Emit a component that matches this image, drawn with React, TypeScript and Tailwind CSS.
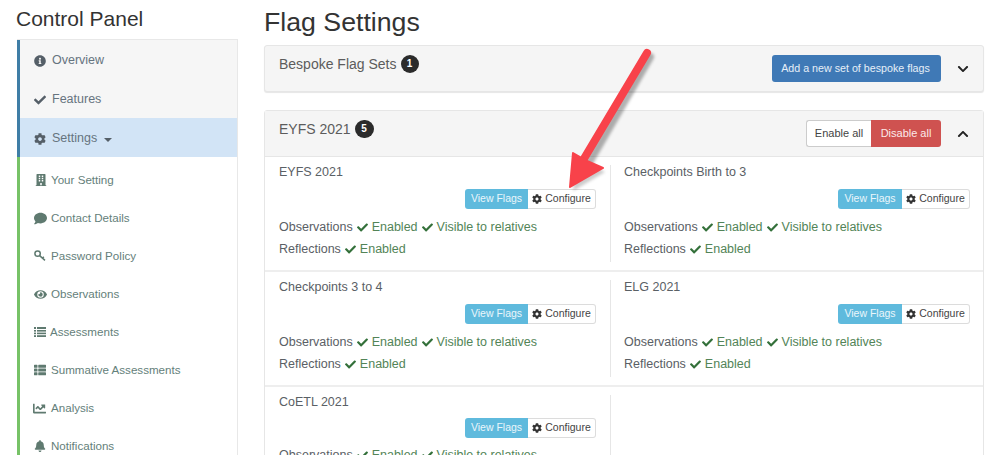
import React from "react";
import { FaInfoCircle, FaCheck, FaCog, FaBuilding, FaComment, FaEye, FaThList, FaChartLine, FaBell, FaChevronDown, FaChevronUp } from "react-icons/fa";

const font = { fontFamily: '"Liberation Sans", Arial, sans-serif' };

function Top({ icon, label, active, caret }: { icon: React.ReactNode; label: string; active?: boolean; caret?: boolean }) {
  return (
    <div className={`h-[39px] flex items-center pt-[2px] pl-[14px] border-l-[3px] border-[#3f7ea6] text-[12.5px] text-[#66747f] ${active ? "bg-[#d2e4f6]" : "bg-[#f6f6f6]"}`}>
      <span className="w-[18px] flex text-[#555f68]">{icon}</span>
      <span>{label}</span>
      {caret && <span className="ml-[7px] mt-[2px] w-0 h-0 border-x-[4px] border-x-transparent border-t-[4px] border-t-[#555f68]" />}
    </div>
  );
}

function Sub({ icon, label, w = 17 }: { icon: React.ReactNode; label: string; w?: number }) {
  return (
    <div className="h-[38px] flex items-center pl-[14px] text-[11.6px] text-[#64807a]">
      <span className="flex text-[#5f7a70]" style={{ width: w }}>{icon}</span>
      <span>{label}</span>
    </div>
  );
}

function ListIcon() {
  return (
    <svg width="12" height="12" viewBox="0 0 12 12" fill="currentColor">
      <rect x="0" y="1" width="2" height="2" />
      <rect x="3" y="1" width="9" height="2" />
      <rect x="0" y="4" width="2" height="1.6" />
      <rect x="3" y="4" width="9" height="1.6" />
      <rect x="0" y="6.6" width="2" height="1.6" />
      <rect x="3" y="6.6" width="9" height="1.6" />
      <rect x="0" y="9.2" width="2" height="1.8" />
      <rect x="3" y="9.2" width="9" height="1.8" />
    </svg>
  );
}

function KeyIcon() {
  return (
    <svg width="12" height="12" viewBox="0 0 12 12" fill="none" stroke="currentColor" strokeWidth="1.5">
      <circle cx="3.6" cy="3.6" r="2.7" />
      <path d="M5.6 5.6 L11 10.4 M8.6 8.2 L9.8 6.8" />
    </svg>
  );
}

function Status({ children }: { children: React.ReactNode }) {
  return (
    <span className="inline-flex items-center text-[#528457]">
      <FaCheck className="text-[#33703a] text-[11px] mx-[4px]" />
      {children}
    </span>
  );
}

function Cell({ title, tight, wide }: { title: string; tight?: boolean; wide?: boolean }) {
  return (
    <div className="h-[97px] mt-[8px] pl-[13px] pr-[13px] first:pl-[14px] first:pr-[14px] text-[12.5px] text-[#5a6065] first:border-r first:border-[#e6e6e6]">
      <div className="h-[17px] leading-[15px]">{title}</div>
      <div className={`flex justify-end text-[10.5px] h-[20px] ${tight ? "mt-[6px]" : "mt-[7px]"}`}>
        <span className={`${wide ? "w-[64px]" : "w-[63px]"} bg-[#5fbadd] text-[#eaf6fb] rounded-l-[3px] flex items-center justify-center`}>View Flags</span>
        <span className="w-[68px] border border-[#dcdcdc] border-l-0 rounded-r-[3px] text-[#444] flex items-center justify-center gap-[3px]">
          <FaCog className="text-[10px] text-[#333]" />Configure
        </span>
      </div>
      <div className={`flex items-center h-[18px] ${tight ? "mt-[8px]" : "mt-[9px]"}`}>
        Observations<Status>Enabled</Status><Status>Visible to relatives</Status>
      </div>
      <div className="flex items-center mt-[4px] h-[18px]">
        Reflections<Status>Enabled</Status>
      </div>
    </div>
  );
}

export default function App() {
  return (
    <div className="relative w-[1000px] h-[455px] overflow-hidden bg-white flex" style={font}>
      <aside className="w-[238px] pl-[16px] shrink-0">
        <h2 className="text-[21px] leading-[24px] mt-[7px] text-[#333]">Control Panel</h2>
        <div className="ml-[1px] mt-[8px] border-t border-r border-[#e8e8e8]">
          <Top icon={<FaInfoCircle className="text-[12px]" />} label="Overview" />
          <Top icon={<FaCheck className="text-[12px]" />} label="Features" />
          <Top icon={<FaCog className="text-[12px]" />} label="Settings" active caret />
          <div className="border-l-[3px] border-[#77c267] pt-[4px]">
            <Sub icon={<FaBuilding className="text-[12px] ml-[1px]" />} label="Your Setting" />
            <Sub icon={<FaComment className="text-[13px]" />} label="Contact Details" />
            <Sub icon={<KeyIcon />} label="Password Policy" />
            <Sub icon={<FaEye className="text-[13px]" />} label="Observations" />
            <Sub icon={<ListIcon />} label="Assessments" w={16} />
            <Sub icon={<FaThList className="text-[12px]" />} label="Summative Assessments" />
            <Sub icon={<FaChartLine className="text-[13px] -ml-[1px]" />} label="Analysis" />
            <Sub icon={<FaBell className="text-[12px]" />} label="Notifications" />
          </div>
        </div>
      </aside>

      <main className="ml-[27px] w-[720px] -translate-x-[1px]">
        <h1 className="text-[26.7px] leading-[30px] mt-[7px] text-[#333]">Flag Settings</h1>

        <section className="mt-[8px] h-[47px] bg-[#f5f5f5] border border-[#e6e6e6] rounded-[3px] shadow-[0_1px_1px_rgba(0,0,0,0.1)] flex items-start pl-[13px] pr-[13px]">
          <div className="mt-[9px] ml-[1px] flex items-center text-[14px] leading-[16px] text-[#5c5c5c]">
            Bespoke Flag Sets
            <span className="ml-[4px] w-[18px] h-[18px] rounded-full bg-[#2b2b2b] text-white text-[10px] font-bold flex items-center justify-center">1</span>
          </div>
          <button className="ml-auto mt-[9px] w-[169px] h-[27px] bg-[#3f79b6] rounded-[3px] text-[10.7px] text-[#e6eff8] pr-[2px]">Add a new set of bespoke flags</button>
          <FaChevronDown className="ml-[16px] mr-[1px] mt-[17px] text-[12px] text-[#222]" />
        </section>

        <section className="mt-[18px] border border-[#e6e6e6] rounded-[3px]">
          <div className="h-[46px] bg-[#f5f5f5] border-b border-[#e6e6e6] flex items-start pl-[13px] pr-[13px]">
            <div className="mt-[9px] ml-[1px] flex items-center text-[14px] leading-[16px] text-[#5c5c5c]">
              EYFS 2021
              <span className="ml-[4px] w-[19px] h-[18px] rounded-full bg-[#2b2b2b] text-white text-[10px] font-bold flex items-center justify-center">5</span>
            </div>
            <div className="ml-auto mt-[9px] flex h-[27px] text-[11px]">
              <span className="w-[65px] bg-white border border-[#cccccc] border-r-0 rounded-l-[3px] text-[#444] flex items-center justify-center">Enable all</span>
              <span className="w-[70px] bg-[#cf5250] rounded-r-[3px] text-[#fbe9e9] flex items-center justify-center">Disable all</span>
            </div>
            <FaChevronUp className="ml-[16px] mr-[1px] mt-[17px] text-[12px] text-[#222]" />
          </div>
          <div className="grid grid-cols-[346px_1fr] h-[115px] border-b-2 border-[#eeeeee]">
            <Cell title="EYFS 2021" />
            <Cell title="Checkpoints Birth to 3" wide />
          </div>
          <div className="grid grid-cols-[346px_1fr] h-[115px] border-b-2 border-[#eeeeee]">
            <Cell title="Checkpoints 3 to 4" />
            <Cell title="ELG 2021" wide />
          </div>
          <div className="grid grid-cols-[346px_1fr] h-[115px]">
            <Cell title="CoETL 2021" tight />
            <div />
          </div>
        </section>
      </main>

      <svg className="absolute left-0 top-0 pointer-events-none" width="1000" height="455" viewBox="0 0 1000 455">
        <defs>
          <filter id="soft" x="-30%" y="-30%" width="160%" height="160%">
            <feGaussianBlur stdDeviation="1.5" />
          </filter>
        </defs>
        <g fill="none" strokeLinecap="round" strokeLinejoin="round">
          <path d="M650 57 L587 166" stroke="#000" strokeOpacity="0.3" strokeWidth="8" filter="url(#soft)" />
          <path d="M647 53 L582 162" stroke="#f8424a" strokeWidth="8" />
        </g>
        <path d="M573 191 L605 172 L577 157 Z" fill="#000" fillOpacity="0.2" filter="url(#soft)" />
        <path d="M570 187 L573 153 L587 161 L603 168 Z" fill="#f8424a" stroke="#f8424a" strokeWidth="2" strokeLinejoin="round" />
      </svg>
    </div>
  );
}
